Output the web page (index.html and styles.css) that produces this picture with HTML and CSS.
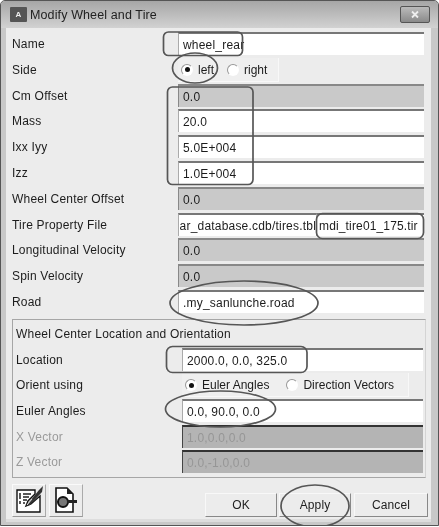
FILE: index.html
```html
<!DOCTYPE html>
<html lang="en">
<head>
<meta charset="utf-8">
<title>Modify Wheel and Tire</title>
<link rel="stylesheet" href="styles.css">
</head>
<body>
<div class="window">
  <header class="titlebar">
    <span class="app-icon">A</span>
    <span class="title">Modify Wheel and Tire</span>
    <span class="close"><svg width="12" height="9" viewBox="0 0 12 9"><path d="M3 1.5 L9 7.5 M9 1.5 L3 7.5" stroke="#eee" stroke-width="1.8"/></svg></span>
  </header>
  <main class="content">
    <div class="rows">
      <div class="row"><label>Name</label><div class="input">wheel_rear</div></div>
      <div class="row"><label>Side</label><div class="radios side"><span class="radio on"></span><span>left</span><span class="radio"></span><span>right</span></div></div>
      <div class="row"><label>Cm Offset</label><div class="input off">0.0</div></div>
      <div class="row"><label>Mass</label><div class="input">20.0</div></div>
      <div class="row"><label>Ixx Iyy</label><div class="input">5.0E+004</div></div>
      <div class="row"><label>Izz</label><div class="input">1.0E+004</div></div>
      <div class="row"><label>Wheel Center Offset</label><div class="input off">0.0</div></div>
      <div class="row"><label>Tire Property File</label><div class="pair"><div class="input scrolled">ar_database.cdb/tires.tbl</div><div class="input mdi">mdi_tire01_175.tir</div></div></div>
      <div class="row"><label>Longitudinal Velocity</label><div class="input off">0.0</div></div>
      <div class="row"><label>Spin Velocity</label><div class="input off">0.0</div></div>
      <div class="row"><label>Road</label><div class="input">.my_sanlunche.road</div></div>
    </div>
    <section class="group">
      <h2>Wheel Center Location and Orientation</h2>
      <div class="row sub"><label>Location</label><div class="input">2000.0, 0.0, 325.0</div></div>
      <div class="row sub"><label>Orient using</label><div class="radios orient"><span class="radio on"></span><span>Euler Angles</span><span class="radio"></span><span>Direction Vectors</span></div></div>
      <div class="row sub"><label>Euler Angles</label><div class="input">0.0, 90.0, 0.0</div></div>
      <div class="row sub dim"><label>X Vector</label><div class="input dis">1.0,0.0,0.0</div></div>
      <div class="row sub dim"><label>Z Vector</label><div class="input dis">0.0,-1.0,0.0</div></div>
    </section>
    <footer class="actions">
      <button class="tool" aria-label="Comments"><svg width="28" height="28" viewBox="0 0 28 28"><path d="M2 4 H20 V8 L13 15 L11 20 L16 18 L25 10 V26 H2 Z" fill="#fff" stroke="#111" stroke-width="1.4"/><path d="M5 7 V13 M5 15 V18 M8 8 H16 M8 11 H14 M8 14 H12 M8 17 H10" stroke="#222" stroke-width="1.5"/><path d="M11 20 L24 4 L28 0 L27 6 L15 19 Z" fill="#333"/><path d="M12 19 L17 13" stroke="#ddd" stroke-width="1"/></svg></button>
      <button class="tool" aria-label="Open file"><svg width="24" height="28" viewBox="0 0 24 28"><path d="M2 2 H13 L19 8 V26 H2 Z" fill="#fff" stroke="#111" stroke-width="1.6"/><path d="M13 2 V8 H19 Z" fill="#222"/><circle cx="9" cy="16" r="5" fill="#777" stroke="#111" stroke-width="2"/><path d="M13 14 H23 V17 H13 Z" fill="#222"/></svg></button>
      <div class="spacer"></div>
      <button class="btn">OK</button>
      <button class="btn">Apply</button>
      <button class="btn cancel">Cancel</button>
    </footer>
  </main>
  <svg class="marks" width="439" height="527" viewBox="0 0 439 527" aria-hidden="true">
    <rect x="163.5" y="32" width="79" height="23.5" rx="5"/>
    <ellipse cx="195" cy="68" rx="22.5" ry="15"/>
    <rect x="167.5" y="87" width="85.5" height="97.5" rx="5"/>
    <rect x="316.5" y="213.5" width="107" height="25" rx="6"/>
    <ellipse cx="244" cy="303" rx="74" ry="22"/>
    <rect x="166.5" y="346.5" width="140.5" height="26" rx="6"/>
    <ellipse cx="220.5" cy="409" rx="55" ry="18"/>
    <ellipse cx="315" cy="506" rx="34" ry="21"/>
  </svg>
</div>
</body>
</html>
```
FILE: styles.css
```css
html, body { margin: 0; padding: 0; }
body { width: 439px; height: 527px; overflow: hidden; background: #fff; font-family: "Liberation Sans", Arial, sans-serif; font-size: 12px; color: #1c1c1c; }
.window { position: relative; width: 439px; height: 526px; box-sizing: border-box; border: 1px solid #555; border-radius: 5px 5px 0 0; background: #c8c8c8; overflow: hidden; filter: blur(0.35px); display: flex; flex-direction: column; }
.titlebar { height: 27px; flex: none; display: flex; align-items: center; padding: 0 8px 0 9px; background: linear-gradient(#a6a6a6, #bcbcbc 50%, #d2d2d2); }
.app-icon { width: 17px; height: 15px; background: #555; color: #eee; font-size: 8px; font-weight: bold; display: flex; align-items: center; justify-content: center; border-radius: 1px; }
.title { margin-left: 3px; font-size: 12.5px; letter-spacing: 0.12px; color: #222; }
.close { margin-left: auto; width: 28px; height: 15px; border: 1px solid #555; border-radius: 2px; background: linear-gradient(#bbb, #8a8a8a); display: flex; align-items: center; justify-content: center; }
.content { flex: 1; margin: 0 7px 3px 5px; background: #ececec; padding: 4px 0 0 6px; display: flex; flex-direction: column; min-height: 0; border-bottom: 3px solid #ddd; }
.rows { display: flex; flex-direction: column; }
.row { height: 25.8px; display: flex; align-items: flex-start; flex: none; }
.row label { width: 166px; flex: none; line-height: 24px; letter-spacing: 0.2px; }
.input { width: 246px; height: 23px; box-sizing: border-box; background: #fff; border-top: 2px solid #777; border-left: 1px solid #aaa; padding: 0 0 0 4px; line-height: 23px; overflow: hidden; white-space: nowrap; letter-spacing: 0.2px; }
.off { background: #c9c9c9; border-top-color: #888; border-left-color: #888; }
.pair { display: flex; width: 246px; }
.scrolled { width: 138px; flex: none; padding: 0; display: flex; justify-content: flex-end; }
.mdi { width: 108px; flex: none; padding-left: 2px; letter-spacing: 0.15px; }
.radios { display: flex; align-items: center; height: 24px; background: #efefef; border-right: 1px solid #f8f8f8; border-bottom: 1px solid #f8f8f8; box-sizing: border-box; }
.side { width: 101px; padding: 1px 0 0 3px; gap: 5px; }
.orient { width: 227px; padding: 1px 0 0 3px; gap: 5px; }
.radio { width: 10px; height: 10px; border-radius: 50%; border: 1px solid transparent; border-top-color: #999; border-left-color: #999; background: #fff; flex: none; position: relative; }
.radio.on::after { content: ""; position: absolute; left: 2.5px; top: 2.5px; width: 5px; height: 5px; border-radius: 50%; background: #111; }
.side .radio + span + .radio { margin-left: 8px; }
.orient .radio + span + .radio { margin-left: 12px; }
.group { width: 414px; height: 159px; box-sizing: border-box; margin-top: 3px; border: 1px solid #a6a6a6; border-right-color: #d4d4d4; padding: 6px 2px 0 3px; flex: none; }
.group h2 { margin: 0; font-size: 12px; font-weight: normal; line-height: 16px; height: 22px; letter-spacing: 0.2px; }
.sub { height: 25.6px; }
.sub label { width: 166px; }
.sub .input { width: 242px; }
.dim label { color: #9a9a9a; }
.sub .dis { background: #b4b4b4; color: #969696; border-top-color: #333; border-left-color: #444; }
.actions { display: flex; align-items: flex-end; height: 33px; margin-top: 6px; flex: none; width: 416px; }
.tool { width: 34px; height: 33px; margin-right: 3px; padding: 0; background: #ececec; border: 1px solid #fafafa; border-right-color: #aaa; border-bottom-color: #999; display: flex; align-items: center; justify-content: center; }
.spacer { flex: 1; }
.btn { width: 72px; height: 24px; padding: 0; margin-left: 2px; background: #ececec; border: 1px solid #f8f8f8; border-right-color: #888; border-bottom-color: #888; font: inherit; color: #222; letter-spacing: 0.1px; }
.cancel { width: 74px; margin-left: 3px; }
.marks { position: absolute; left: -1px; top: -1px; pointer-events: none; }
.marks * { fill: none; stroke: #565656; stroke-width: 1.7; }
```
